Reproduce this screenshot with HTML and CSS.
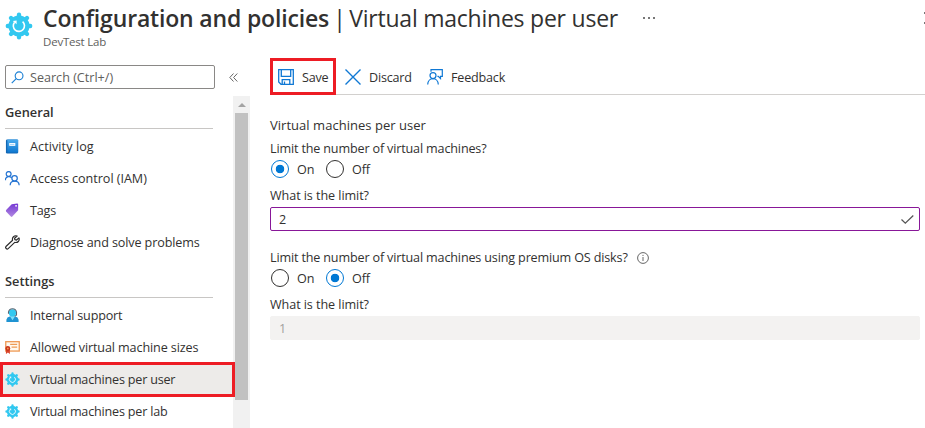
FILE: index.html
```html
<!DOCTYPE html>
<html lang="en">
<head>
<meta charset="utf-8">
<title>Configuration and policies</title>
<link rel="stylesheet" href="styles.css">
</head>
<body>
<svg class="defs" width="0" height="0">
  <defs>
    <linearGradient id="book" x1="0" y1="0" x2="0" y2="1"><stop offset="0" stop-color="#4aabee"/><stop offset="1" stop-color="#0f78d0"/></linearGradient>
    <linearGradient id="tag" x1="0" y1="0" x2="0" y2="1"><stop offset="0" stop-color="#7436d4"/><stop offset="1" stop-color="#b089e0"/></linearGradient>
    <symbol id="gear" viewBox="0 0 28 28">
      <circle cx="14" cy="14" r="10.6" fill="#32c8f0"/>
      <g stroke="#32c8f0" stroke-width="4.4" stroke-linecap="round">
        <path d="M14 2.8V25.2M2.8 14H25.2M6 6L22 22M22 6L6 22"/>
      </g>
      <path d="M9.6 10.2A5.6 5.6 0 1 0 17.6 9.6" fill="none" stroke="#fff" stroke-width="1.6"/>
      <path d="M7.8 9L11.6 8.6V12.2Z" fill="#fff"/>
    </symbol>
  </defs>
</svg>
<header class="header">
  <svg class="logo" viewBox="0 0 28 28"><use href="#gear"/></svg>
  <div class="titles">
    <h1><b>Configuration and policies</b><i>|</i><span>Virtual machines per user</span></h1>
    <p>DevTest Lab</p>
  </div>
  <div class="more"><i></i><i></i><i></i></div>
  <div class="edge"><i></i><i></i></div>
</header>
<div class="body">
  <aside class="sidebar">
    <div class="searchrow">
      <div class="search">
        <svg width="13" height="13" viewBox="0 0 14 14" fill="none" stroke="#1a7fd4" stroke-width="1.2"><circle cx="8.7" cy="5.2" r="4.2"/><path d="M5.6 8.2L.8 13"/></svg>
        <span>Search (Ctrl+/)</span>
      </div>
      <svg class="collapse" width="9" height="9" viewBox="0 0 9 9" fill="none" stroke="#666"><path d="M4.5 .5L.8 4.5L4.5 8.5M8.3 .5L4.6 4.5L8.3 8.5"/></svg>
    </div>
    <div class="navwrap">
      <nav class="nav">
        <h2>General</h2>
        <a><svg viewBox="0 0 16 16"><rect x="1" y=".5" width="13" height="15" rx="1.4" fill="#1267b4"/><rect x="2.5" y=".5" width="11.5" height="13.8" rx=".8" fill="url(#book)"/><rect x="4.5" y="4.3" width="6.5" height="3" fill="#fff"/><path d="M5.4 5.8H10" stroke="#9fd0f5"/></svg><span class="loose">Activity log</span></a>
        <a><svg viewBox="0 0 16 16" fill="none" stroke="#2373d2" stroke-width="1.3"><circle cx="3.9" cy="3.2" r="2.6"/><path d="M.5 9.8V8.8C.9 5.1 6.4 5.2 7 7.7"/><circle cx="10.2" cy="7.8" r="2.9"/><path d="M5.5 15.2C5.7 9.4 14.9 9.4 15.1 15.2"/></svg><span class="normal">Access control (IAM)</span></a>
        <a><svg viewBox="0 0 16 16"><path d="M7.1 1.3L13 .5Q14 .5 14 1.5V7.6L7.8 14.4Q7 15.2 6.2 14.4L1.2 9Q.6 8.2 1.2 7.4Z" fill="url(#tag)"/><circle cx="11.8" cy="3" r="1" fill="#fff"/></svg><span class="tight">Tags</span></a>
        <a><svg viewBox="0 0 16 16" fill="none" stroke="#2b2b2b" stroke-width="1.25" stroke-linejoin="round"><path d="M13 1.1C9.9 0 7.2 2.6 8.1 5.6L1 12.3C-.2 13.6 2 15.8 3.4 14.5L10.4 7.8C13.5 8.7 16 6.2 14.9 3.1L12.3 5.4L10.5 5L10.2 3.4Z"/></svg><span>Diagnose and solve problems</span></a>
        <h2 class="second">Settings</h2>
        <a><svg viewBox="0 0 16 16"><path d="M1.5 15V12.5Q2 9.5 5 9H11Q14 9.5 14.5 12.5V15Z" fill="#1f93d2"/><path d="M5.5 9H10.5L8 13Z" fill="#7be0fa"/><circle cx="8" cy="5.2" r="3.9" fill="#32c8f0"/><path d="M3.7 6V4.3C4.5-.5 11.5-.5 12.3 4.3V7.5L10.5 9" fill="none" stroke="#546473" stroke-width="1.1"/></svg><span class="tight">Internal support</span></a>
        <a><svg viewBox="0 0 16 16"><rect x=".8" y="1.8" width="14.4" height="10" fill="#fffaf0" stroke="#ef9a55" stroke-width="1.4"/><path d="M5.5 4.7H13M7 7.5H13" stroke="#ee9b55" stroke-width="1.3"/><path d="M1 9.5V15L3.1 13.4L5.2 15V9.5Z" fill="#d9442a"/><circle cx="3" cy="9" r="2.6" fill="#c8321d"/><circle cx="3" cy="9" r="1" fill="#f49b45"/></svg><span>Allowed virtual machine sizes</span></a>
        <a class="active"><svg viewBox="0 0 28 28"><use href="#gear"/></svg><span class="tight">Virtual machines per user</span></a>
        <a><svg viewBox="0 0 28 28"><use href="#gear"/></svg><span class="tight">Virtual machines per lab</span></a>
      </nav>
      <div class="scroll"><b></b><div></div></div>
    </div>
  </aside>
  <main class="main">
    <div class="toolbar">
      <div class="tool save"><svg width="16" height="16" viewBox="0 0 16 16" fill="none" stroke="#0f78d4" stroke-width="1.3"><path d="M.7 .7H15.3V15.3H3L.7 13ZM3.3 .7V7.3H12.7V.7M4.2 15.3V10.7H11.8V15.3M6.5 12.5V15.3"/></svg><span>Save</span></div>
      <div class="tool discard"><svg width="16" height="16" viewBox="0 0 16 16" fill="none" stroke="#0f78d4" stroke-width="1.4"><path d="M.5 .5L15.5 15.5M15.5 .5L.5 15.5"/></svg><span>Discard</span></div>
      <div class="tool feedback"><svg width="16" height="16" viewBox="0 0 16 16" fill="none" stroke="#0f78d4" stroke-width="1.2"><path d="M4 2.8V.7H15.3V7.4H13.5V9.6L11.3 7.4H10.4"/><circle cx="6" cy="6.6" r="3"/><path d="M.7 15.5C1 7.7 11 7.7 11.3 15.5"/></svg><span class="tight">Feedback</span></div>
    </div>
    <section class="form">
      <p class="lead">Virtual machines per user</p>
      <p class="q">Limit the number of virtual machines?</p>
      <div class="radios"><i class="on"></i><span class="on-label">On</span><i></i><span>Off</span></div>
      <p class="limit">What is the limit?</p>
      <div class="field"><span>2</span><svg width="13" height="9" viewBox="0 0 13 9" fill="none" stroke="#555" stroke-width="1.3"><path d="M.5 4.5L4.3 8.1L12.3 .5"/></svg></div>
      <div class="question"><p class="q">Limit the number of virtual machines using premium OS disks?</p><svg width="12" height="12" viewBox="0 0 12 12" fill="none" stroke="#666"><circle cx="6" cy="6" r="5.4"/><path d="M6 5V9M6 2.9V4"/></svg></div>
      <div class="radios"><i></i><span class="on-label">On</span><i class="on"></i><span>Off</span></div>
      <p class="limit">What is the limit?</p>
      <div class="field disabled"><span>1</span></div>
    </section>
  </main>
</div>
</body>
</html>
```
FILE: styles.css
```css
* { box-sizing: border-box; margin: 0; padding: 0; }
body { width: 925px; height: 428px; overflow: hidden; background: #fff; color: #323130; font: 12.6px/18px "Open Sans", "Noto Sans", sans-serif; }
.defs { display: block; }
span, p, h2 { white-space: nowrap; }
.header { display: flex; height: 58px; padding-left: 5px; }
.logo { width: 28px; height: 28px; margin: 12px 10px 0 0; }
.titles { width: 575px; padding-top: 2px; }
h1 { display: flex; font-size: 23px; line-height: 32px; font-weight: 400; white-space: nowrap; }
h1 b { width: 287px; font-weight: 600; letter-spacing: -.17px; }
h1 i { width: 20px; padding-left: 4px; font-style: normal; }
h1 span { letter-spacing: -.23px; }
.titles p { font-size: 11.5px; line-height: 16px; letter-spacing: -.2px; color: #605e5c; }
.more { display: flex; gap: 3px; padding: 17px 0 0 25px; }
.more i { width: 2px; height: 2px; background: #777; }
.edge { margin-left: auto; padding-top: 12px; }
.edge i { display: block; width: 1px; height: 2px; margin-bottom: 8px; background: #777; }
.body { display: grid; grid-template-columns: 250px 655px; column-gap: 20px; height: 370px; }
.sidebar { display: flex; flex-direction: column; height: 370px; }
.searchrow { display: flex; padding: 7px 0 7px 5px; }
.search { display: flex; align-items: center; gap: 6px; width: 210px; height: 24px; padding: 0 0 0 5px; border: 1px solid #8a8886; border-radius: 2px; color: #605e5c; }
.search span { padding-top: 1px; }
.collapse { margin: 8px 0 0 14px; }
.navwrap { display: flex; flex: 1; min-height: 0; }
.nav { width: 235px; margin-right: -2px; position: relative; z-index: 1; }
.nav h2 { width: 208px; height: 33px; margin: 0 0 1px 5px; padding-top: 8px; font-size: 12.8px; line-height: 17px; font-weight: 600; border-bottom: 1px solid #c8c6c4; }
.nav h2.second { height: 40px; margin-bottom: 1px; padding-top: 15px; }
.nav a { display: flex; align-items: center; height: 32px; padding-left: 5px; }
.nav a svg { width: 15px; height: 15px; margin-right: 10px; }
.nav a span { padding-top: 2px; letter-spacing: -.12px; }
.nav a span.loose { letter-spacing: .08px; }
.nav a span.normal { letter-spacing: -.04px; }
.nav a span.tight { letter-spacing: -.2px; }
.nav a.active { height: 35px; margin: -1px 0 -2px; padding-left: 2px; border: 3px solid #ed1c24; background: #edebe9; }
.nav a.active span { padding-top: 0; }
.scroll { width: 17px; background: #f1f1f1; }
.scroll b { display: block; width: 0; margin: 7px 0 6px 5px; border: 4px solid transparent; border-top: 0; border-bottom-color: #a3a3a3; }
.scroll div { width: 13px; height: 287px; margin-left: 2px; background: #c1c1c1; }
.toolbar { display: flex; height: 37px; border-bottom: 1px solid #d2d0ce; }
.tool { display: flex; align-items: center; height: 37px; }
.tool span { padding-top: 2px; }
.save { width: 66px; padding-left: 5px; border: 3px solid #ed1c24; gap: 8px; }
.save span { letter-spacing: -.2px; }
.discard { padding-left: 9px; gap: 8px; width: 91px; }
.discard span { letter-spacing: -.2px; }
.feedback { gap: 8px; }
.feedback span { letter-spacing: -.2px; }
.form { width: 650px; padding-top: 20px; }
.lead { line-height: 20px; margin-bottom: 5px; font-size: 13px; letter-spacing: .03px; }
.q { letter-spacing: -.16px; }
.limit { letter-spacing: -.07px; }
.radios { display: flex; align-items: center; height: 20px; margin: 1px 0 8px; }
.radios span { padding-top: 1px; letter-spacing: -.1px; }
.radios i { width: 18px; height: 18px; margin: 0 8px 0 1px; border: 1px solid #323130; border-radius: 50%; }
.radios i.on { border-color: #0078d4; background: radial-gradient(circle, #0078d4 4px, transparent 4.6px); }
.on-label { width: 28px; }
.field { display: flex; align-items: center; justify-content: space-between; height: 24px; margin: 2px 0 18px; padding: 0 5px 0 8px; border: 1px solid #881798; border-radius: 2px; }
.field span { padding-top: 1px; }
.disabled { border-color: #f3f2f1; background: #f3f2f1; color: #a19f9d; }
.question { display: flex; align-items: center; gap: 9px; }
```
